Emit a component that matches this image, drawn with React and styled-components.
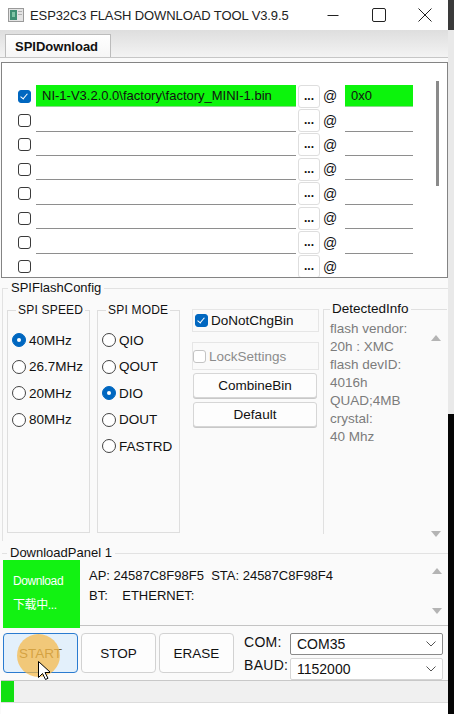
import React from 'react'
import styled, { createGlobalStyle, css } from 'styled-components'

const files = [
    { on: true, path: 'NI-1-V3.2.0.0\\factory\\factory_MINI-1.bin', addr: '0x0' },
    {}, {}, {}, {}, {}, {}, {},
]
const speeds = [['40MHz', true], ['26.7MHz'], ['20MHz'], ['80MHz']]
const modes = [['QIO'], ['QOUT'], ['DIO', true], ['DOUT'], ['FASTRD']]
const detected = ['flash vendor:', '20h : XMC', 'flash devID:', '4016h', 'QUAD;4MB', 'crystal:', '40 Mhz']

const App = () => {
    return (
        <Page>
            <GlobalStyle />
            <Window>
                <TitleBar>
                    <AppIcon viewBox="0 0 16 14">
                        <rect x="0.5" y="0.5" width="15" height="13" fill="#e4e4e4" stroke="#9a9a9a" />
                        <rect x="2" y="2" width="7" height="10" fill="#3d8f72" />
                        <rect x="4" y="4" width="3" height="5" fill="#7fc4a5" />
                        <rect x="10" y="3" width="4" height="1" fill="#b0b0b0" />
                        <rect x="10" y="6" width="4" height="1" fill="#b0b0b0" />
                    </AppIcon>
                    <Title>ESP32C3 FLASH DOWNLOAD TOOL V3.9.5</Title>
                    <WinControls>
                        <WinButton>
                            <svg width="12" height="12" viewBox="0 0 12 12"><path d="M0.5 6.5h11" stroke="#222" /></svg>
                        </WinButton>
                        <WinButton>
                            <svg width="14" height="14" viewBox="0 0 14 14"><rect x="0.5" y="0.5" width="13" height="13" rx="1.5" fill="none" stroke="#222" /></svg>
                        </WinButton>
                        <WinButton>
                            <svg width="14" height="14" viewBox="0 0 14 14"><path d="M0.5 0.5l13 13M13.5 0.5l-13 13" stroke="#222" /></svg>
                        </WinButton>
                    </WinControls>
                </TitleBar>

                <TabStrip>
                    <Tab>SPIDownload</Tab>
                </TabStrip>

                <Body>
                    <FileList>
                        {files.map((f, i) => (
                            <FileRow key={i}>
                                <Check checked={f.on} />
                                <PathField active={f.on}>{f.path}</PathField>
                                <BrowseButton>...</BrowseButton>
                                <At>@</At>
                                <AddrField active={f.on}>{f.addr}</AddrField>
                            </FileRow>
                        ))}
                        <ScrollThumb />
                    </FileList>

                    <ConfigGroup>
                        <Legend>SPIFlashConfig</Legend>
                        <ConfigInner>
                            <SubGroup>
                                <SmallLegend>SPI SPEED</SmallLegend>
                                {speeds.map(([label, on]) => (
                                    <RadioRow key={label}><Radio checked={on} />{label}</RadioRow>
                                ))}
                            </SubGroup>
                            <SubGroup>
                                <SmallLegend>SPI MODE</SmallLegend>
                                {modes.map(([label, on]) => (
                                    <RadioRow key={label}><Radio checked={on} />{label}</RadioRow>
                                ))}
                            </SubGroup>
                            <OptionColumn>
                                <OptionFrame>
                                    <Check checked />
                                    <span>DoNotChgBin</span>
                                </OptionFrame>
                                <OptionFrame tall disabled>
                                    <Check disabled />
                                    <span>LockSettings</span>
                                </OptionFrame>
                                <FlatButton>CombineBin</FlatButton>
                                <FlatButton>Default</FlatButton>
                            </OptionColumn>
                            <InfoGroup>
                                <InfoLegend>DetectedInfo</InfoLegend>
                                {detected.map((t) => <InfoLine key={t}>{t}</InfoLine>)}
                                <Arrow up top={18} />
                                <Arrow top={214} />
                            </InfoGroup>
                        </ConfigInner>
                    </ConfigGroup>

                    <DownloadGroup>
                        <Legend>DownloadPanel 1</Legend>
                        <DownloadInner>
                            <StatusBox>
                                <span>Download</span>
                                <span>下载中...</span>
                            </StatusBox>
                            <LogArea>
                                <LogLine>AP:&nbsp;24587C8F98F5&nbsp;&nbsp;STA:&nbsp;24587C8F98F4</LogLine>
                                <LogLine>BT:&nbsp;&nbsp;&nbsp;&nbsp;ETHERNET:</LogLine>
                                <Arrow up top={8} />
                                <Arrow top={48} />
                            </LogArea>
                        </DownloadInner>
                    </DownloadGroup>

                    <ControlRow>
                        <ActionButton primary>
                            START
                            <Highlight />
                            <Cursor viewBox="0 0 12 19">
                                <path d="M0.5 0.5v16l4-4 3 6 2.5-1.2-3-5.8h5.5z" fill="#fff" stroke="#000" strokeLinejoin="round" />
                            </Cursor>
                        </ActionButton>
                        <ActionButton>STOP</ActionButton>
                        <ActionButton>ERASE</ActionButton>
                        <PortLabels>
                            <span>COM:</span>
                            <span>BAUD:</span>
                        </PortLabels>
                        <PortSelects>
                            <Select dark>COM35<Chevron /></Select>
                            <Select>1152000<Chevron /></Select>
                        </PortSelects>
                    </ControlRow>

                    <Progress>
                        <ProgressFill style={{ width: '3%' }} />
                    </Progress>
                    <BottomPad />
                </Body>
            </Window>
            <RightEdge />
        </Page>
    )
}

export default App

const Chevron = () => (
    <ChevronSvg viewBox="0 0 10 6"><path d="M0.5 0.5l4.5 4.5 4.5-4.5" fill="none" stroke="#555" /></ChevronSvg>
)

const GlobalStyle = createGlobalStyle`
    html, body {
        margin: 0;
        padding: 0;
        width: 454px;
        height: 714px;
        overflow: hidden;
        background: #1b1b1b;
    }
    body {
        font-family: "Liberation Sans", "Noto Sans CJK SC", sans-serif;
        color: #111;
    }
`;

const Page = styled.div`
    display: flex;
    width: 454px;
    height: 714px;
`;
const Window = styled.div`
    width: 448px;
    height: 714px;
    display: flex;
    flex-direction: column;
    background: #fff;
`;
const RightEdge = styled.div`
    width: 6px;
    background: linear-gradient(to bottom, #3a3a3a 0, #3a3a3a 30px, #e9e9e9 30px, #e9e9e9 414px, #050505 414px);
`;

const TitleBar = styled.div`
    height: 30px;
    display: flex;
    align-items: center;
    padding-left: 8px;
    background: #fff;
`;
const AppIcon = styled.svg`
    width: 16px;
    height: 14px;
`;
const Title = styled.span`
    margin-left: 6px;
    font-size: 13px;
    letter-spacing: -0.1px;
    color: #222;
`;
const WinControls = styled.div`
    margin-left: auto;
    display: flex;
`;
const WinButton = styled.div`
    width: 46px;
    height: 30px;
    display: flex;
    align-items: center;
    justify-content: center;
`;

const TabStrip = styled.div`
    height: 27px;
    display: flex;
    align-items: flex-end;
    padding-left: 5px;
    background: linear-gradient(to bottom, #dedede, #f3f3f3);
    border-bottom: 1px solid #c6c6c6;
`;
const Tab = styled.div`
    width: 95px;
    height: 22px;
    padding-left: 9px;
    display: flex;
    align-items: center;
    font-size: 13px;
    font-weight: bold;
    background: linear-gradient(to bottom, #ffffff, #f6f6f6);
    border: 1px solid #bcbcbc;
    border-bottom: none;
`;

const Body = styled.div`
    flex: 1;
    display: flex;
    flex-direction: column;
    padding-left: 1px;
    background: #fafafa;
`;

const FileList = styled.div`
    position: relative;
    margin-top: 4px;
    height: 193px;
    padding-top: 21px;
    background: #fff;
    border: 1px solid #848484;
    overflow: hidden;
`;
const FileRow = styled.div`
    height: 24.4px;
    display: flex;
    align-items: center;
`;
const Check = styled.span`
    flex: none;
    width: 11px;
    height: 11px;
    margin-left: ${(p) => (p.disabled ? '0' : '16px')};
    border: 1px solid ${(p) => (p.disabled ? '#c4c4c4' : '#3a3a3a')};
    border-radius: 3px;
    background: #fff;
    position: relative;
    ${(p) => p.checked && css`
        background: #0067c0;
        border-color: #0067c0;
        &::after {
            content: '';
            position: absolute;
            left: 3px;
            top: 1px;
            width: 3px;
            height: 6px;
            border: solid #fff;
            border-width: 0 1px 1px 0;
            transform: rotate(40deg);
        }
    `}
`;
const PathField = styled.div`
    width: 254px;
    height: 21px;
    margin-left: 5px;
    padding-left: 6px;
    box-sizing: content-box;
    line-height: 21px;
    font-size: 13px;
    white-space: nowrap;
    overflow: hidden;
    ${(p) => (p.active
        ? css`background: #0cf40c; border-bottom: 1px solid #8ad88a;`
        : css`border-bottom: 1px solid #8e8e8e;`)}
`;
const BrowseButton = styled.div`
    width: 20px;
    height: 21px;
    margin-left: 2px;
    border: 1px solid #dedede;
    border-radius: 3px;
    background: #fff;
    font-size: 12px;
    font-weight: bold;
    text-align: center;
    line-height: 21px;
`;
const At = styled.span`
    width: 14px;
    margin-left: 3px;
    font-size: 14px;
`;
const AddrField = styled(PathField)`
    width: 62px;
    margin-left: 8px;
`;
const ScrollThumb = styled.div`
    position: absolute;
    right: 8px;
    top: 18px;
    width: 3px;
    height: 105px;
    background: #8a8a8a;
`;

const groupBase = css`
    margin: 0;
    padding: 0;
    min-width: 0;
`;
const Legend = styled.legend`
    margin-left: 5px;
    padding: 0 3px;
    font-size: 13px;
    line-height: 16px;
    white-space: nowrap;
`;
const SmallLegend = styled(Legend)`
    margin-left: 4px;
    padding: 0 2px;
    font-size: 12px;
    letter-spacing: 0.2px;
`;
const InfoLegend = styled(Legend)`
    margin-left: 0;
    padding: 0 2px;
    font-size: 13.5px;
`;

const ConfigGroup = styled.fieldset`
    ${groupBase};
    margin: 2px 0 0 1px;
    height: 261px;
    box-sizing: border-box;
    border: 1px solid #e2e2e2;
    border-right: none;
    border-bottom: none;
`;
const ConfigInner = styled.div`
    display: flex;
    align-items: flex-start;
    padding-left: 4px;
`;
const SubGroup = styled.fieldset`
    ${groupBase};
    margin: 6px 7px 0 0;
    width: 83px;
    height: 231px;
    box-sizing: border-box;
    padding: 9px 0 0 4px;
    border: 1px solid #dedede;
`;
const RadioRow = styled.div`
    height: 26.5px;
    display: flex;
    align-items: center;
    font-size: 13.5px;
    gap: 3px;
`;
const Radio = styled.span`
    flex: none;
    width: 12px;
    height: 12px;
    border-radius: 50%;
    border: 1px solid #444;
    background: #fff;
    position: relative;
    ${(p) => p.checked && css`
        background: #0067c0;
        border-color: #0067c0;
        &::after {
            content: '';
            position: absolute;
            left: 4px;
            top: 4px;
            width: 4px;
            height: 4px;
            border-radius: 50%;
            background: #fff;
        }
    `}
`;

const OptionColumn = styled.div`
    margin: 13px 0 0 5px;
    width: 127px;
    display: flex;
    flex-direction: column;
`;
const OptionFrame = styled.div`
    height: ${(p) => (p.tall ? '26px' : '21px')};
    margin-top: ${(p) => (p.tall ? '10px' : '0')};
    display: flex;
    align-items: center;
    gap: 3px;
    padding-left: ${(p) => (p.disabled ? '0' : '2px')};
    border: 1px solid #e6e6e6;
    font-size: 13.5px;
    color: ${(p) => (p.disabled ? '#8c8c8c' : '#111')};
    & > span:first-child {
        margin-left: 0;
    }
`;
const FlatButton = styled.div`
    margin: 3px 2px 1px 1px;
    height: 23px;
    display: flex;
    align-items: center;
    justify-content: center;
    font-size: 13.5px;
    background: #fdfdfd;
    border: 1px solid #d6d6d6;
    border-radius: 3px;
    box-shadow: 0 1px 0 #c8c8c8;
`;

const InfoGroup = styled.fieldset`
    ${groupBase};
    position: relative;
    flex: 1;
    margin: 5px 1px 0 4px;
    height: 233px;
    box-sizing: border-box;
    padding: 3px 0 0 6px;
    border: 1px solid #e0e0e0;
    border-right: none;
    border-bottom: none;
`;
const InfoLine = styled.div`
    height: 18px;
    line-height: 18px;
    font-size: 13.5px;
    color: #7c7c7c;
`;
const Arrow = styled.span`
    position: absolute;
    right: 6px;
    top: ${(p) => p.top}px;
    width: 0;
    height: 0;
    border-left: 5px solid transparent;
    border-right: 5px solid transparent;
    ${(p) => (p.up
        ? css`border-bottom: 6px solid #b4b4b4;`
        : css`border-top: 6px solid #b4b4b4;`)}
`;

const DownloadGroup = styled.fieldset`
    ${groupBase};
    margin: 4px 0 0 1px;
    border: none;
    border-top: 1px solid #e2e2e2;
`;
const DownloadInner = styled.div`
    display: flex;
    margin-top: -1px;
    padding-left: 1px;
`;
const StatusBox = styled.div`
    width: 77px;
    height: 68px;
    box-sizing: border-box;
    padding: 12px 0 0 10px;
    display: flex;
    flex-direction: column;
    gap: 6px;
    background: #12f212;
    color: #fff;
    font-size: 12px;
    letter-spacing: -0.4px;
    line-height: 18px;
`;
const LogArea = styled.div`
    position: relative;
    flex: 1;
    height: 66px;
    padding: 6px 0 0 9px;
    box-sizing: border-box;
    border-bottom: 1px solid #c4c4c4;
`;
const LogLine = styled.div`
    height: 20px;
    line-height: 20px;
    font-size: 13px;
`;

const ControlRow = styled.div`
    height: 52px;
    display: flex;
    align-items: flex-start;
    padding: 5px 0 0 2px;
    box-sizing: border-box;
`;
const ActionButton = styled.div`
    position: relative;
    width: 73px;
    height: 38px;
    margin-right: 3px;
    display: flex;
    align-items: center;
    justify-content: center;
    font-size: 13.5px;
    border-radius: 4px;
    border: 1px solid #d2d2d2;
    background: #fdfdfd;
    ${(p) => p.primary && css`
        border-color: #2a7bd0;
        background: #e3f0fb;
        color: #7a6a3a;
    `}
`;
const Highlight = styled.span`
    position: absolute;
    left: 13px;
    top: 0;
    width: 43px;
    height: 43px;
    border-radius: 50%;
    background: rgba(246, 184, 70, 0.72);
`;
const Cursor = styled.svg`
    position: absolute;
    left: 34px;
    top: 27px;
    width: 12px;
    height: 19px;
`;
const PortLabels = styled.div`
    margin-left: 7px;
    width: 46px;
    display: flex;
    flex-direction: column;
    gap: 5px;
    font-size: 14px;
    line-height: 18px;
    letter-spacing: 0.3px;
`;
const PortSelects = styled.div`
    display: flex;
    flex-direction: column;
    gap: 3px;
`;
const Select = styled.div`
    width: 139px;
    height: 20px;
    padding: 0 6px;
    display: flex;
    align-items: center;
    justify-content: space-between;
    font-size: 14px;
    background: #fff;
    border: 1px solid ${(p) => (p.dark ? '#8a8a8a' : '#d6d6d6')};
    border-radius: 2px;
`;
const ChevronSvg = styled.svg`
    width: 10px;
    height: 6px;
`;

const Progress = styled.div`
    height: 21px;
    background: #f0f0f0;
    border-top: 1px solid #c8c8c8;
    border-bottom: 1px solid #dcdcdc;
    display: flex;
`;
const ProgressFill = styled.div`
    background: #11e011;
`;
const BottomPad = styled.div`
    flex: 1;
    background: #fff;
`;
